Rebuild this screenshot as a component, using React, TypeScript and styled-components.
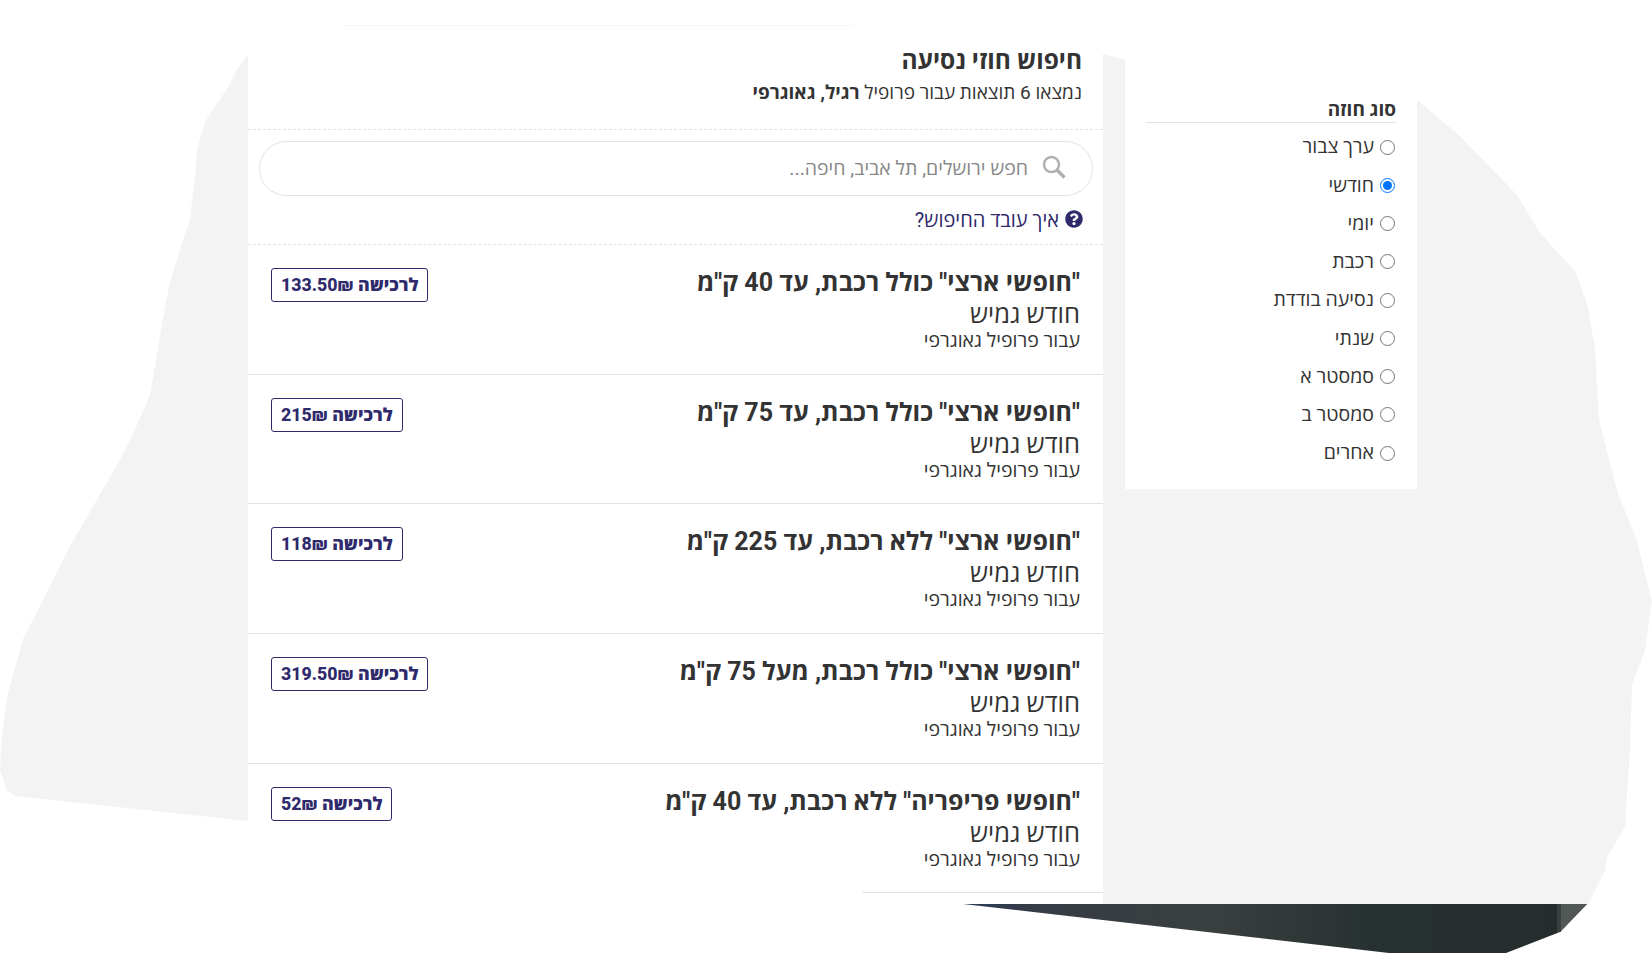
import * as React from 'react'
import styled, { createGlobalStyle } from 'styled-components'
import { FaQuestionCircle } from 'react-icons/fa'

const GlobalStyle = createGlobalStyle`
  html, body {
    margin: 0;
    padding: 0;
    background: white;
  }
  * {
    box-sizing: border-box;
  }
`

const Page = styled.div`
  position: relative;
  height: 953px;
  overflow: hidden;
  font-family: 'Roboto', 'Open Sans', sans-serif;
  color: #333;
`

const Backdrop = styled.svg`
  position: absolute;
  top: 0;
  left: 0;
`

const Layout = styled.div`
  position: relative;
  display: flex;
  align-items: flex-start;
  gap: 22px;
  padding-right: 235px;
`

const Sidebar = styled.aside`
  width: 292px;
  height: 489px;
  padding: 99px 21px 0;
  background-color: white;
`

const FilterTitle = styled.h3`
  margin: 0 0 5px;
  padding-bottom: 2px;
  height: 24px;
  line-height: 21px;
  font-size: 19px;
  font-weight: 700;
  border-bottom: 1px solid #e2e2e2;
`

const FilterOption = styled.label`
  display: flex;
  align-items: center;
  gap: 6px;
  height: 38.25px;
  padding-right: 1px;
  font-size: 19.5px;
  line-height: 1;
`

const Radio = styled.input`
  width: 15px;
  height: 15px;
  margin: 0;
  accent-color: #0075ff;
`

const Main = styled.main`
  position: relative;
  width: 855px;
  height: 904px;
  background-color: white;
`

const FaintLine = styled.div`
  position: absolute;
  top: 25px;
  left: 97px;
  width: 508px;
  height: 1px;
  background-color: #f5f5f5;
`

const Header = styled.header`
  height: 130px;
  padding: 46px 21px 0;
  border-bottom: 1px dashed #e2e2e2;
`

const Title = styled.h1`
  margin: 0 0 5px;
  font-size: 24.5px;
  line-height: 30px;
  font-weight: 700;
`

const Subtitle = styled.p`
  margin: 0;
  font-size: 19px;
  line-height: 24px;
`

const SearchArea = styled.div`
  height: 115px;
  padding: 11px 10px 0 11px;
  border-bottom: 1px dashed #e2e2e2;
`

const SearchBox = styled.div`
  display: flex;
  align-items: center;
  gap: 14px;
  height: 55px;
  padding: 0 26px 3px;
  border: 1px solid #e2e2e2;
  border-radius: 28px;
  font-size: 19.5px;
  color: #888;
`

const HowLink = styled.div`
  display: flex;
  align-items: center;
  gap: 6px;
  height: 46px;
  padding-right: 10px;
  font-size: 20px;
  color: #2e2a6b;
`

const Row = styled.article`
  display: flex;
  justify-content: space-between;
  align-items: flex-start;
  height: 129.7px;
  padding: 23px 23px 0 23px;
  border-bottom: 1px solid #e2e2e2;
  &:last-of-type {
    border-bottom: none;
  }
`

const RowText = styled.div`
  display: flex;
  flex-direction: column;
`

const RowTitle = styled.h2`
  margin: 0;
  font-size: 25px;
  line-height: 30px;
  font-weight: 700;
`

const RowKind = styled.span`
  font-size: 25.5px;
  line-height: 32px;
`

const RowProfile = styled.span`
  font-size: 19.5px;
  line-height: 21px;
`

const BuyButton = styled.a`
  display: block;
  height: 34px;
  padding: 0 9px;
  border: 1px solid #2e2a6b;
  border-radius: 3px;
  font-size: 17.8px;
  font-weight: 800;
  line-height: 32px;
  color: #2e2a6b;
  white-space: nowrap;
`

const ClosingLine = styled.div`
  position: absolute;
  top: 892px;
  right: 0;
  width: 241px;
  height: 1px;
  background-color: #e2e2e2;
`

const contractTypes = ['ערך צבור', 'חודשי', 'יומי', 'רכבת', 'נסיעה בודדת', 'שנתי', 'סמסטר א', 'סמסטר ב', 'אחרים']

const contracts = [
  { title: '"חופשי ארצי" כולל רכבת, עד 40 ק"מ', price: '133.50' },
  { title: '"חופשי ארצי" כולל רכבת, עד 75 ק"מ', price: '215' },
  { title: '"חופשי ארצי" ללא רכבת, עד 225 ק"מ', price: '118' },
  { title: '"חופשי ארצי" כולל רכבת, מעל 75 ק"מ', price: '319.50' },
  { title: '"חופשי פריפריה" ללא רכבת, עד 40 ק"מ', price: '52' },
]

const blob =
  '248,54 238,68 227,89 213,109 205,122 197,150 195,174 190,220 183,240 170,282 163,318 157,354 150,395 130,441 113,472 73,541 43,600 23,639 8,693 2,734 0,770 7,790 15,796 248,821 248,904 1588,904 1605,871 1607,857 1625,827 1630,750 1632,684 1645,651 1652,601 1637,541 1617,491 1599,420 1595,348 1587,304 1575,271 1540,233 1517,195 1458,134 1417,100 1125,60 1103,54'

const SearchIcon = () => (
  <svg width="24" height="24" viewBox="0 0 24 24" fill="none" stroke="#b0b0b0">
    <circle cx="9.5" cy="9.5" r="7.5" strokeWidth="2.4" />
    <path d="M15 15l7.5 7.5" strokeWidth="3.4" />
  </svg>
)

const App = () => (
  <Page dir="rtl">
    <GlobalStyle />
    <Backdrop width="1652" height="953" viewBox="0 0 1652 953">
      <defs>
        <linearGradient id="floor" x1="963" y1="0" x2="1588" y2="0" gradientUnits="userSpaceOnUse">
          <stop offset="0" stopColor="#2a3a58" />
          <stop offset="0.12" stopColor="#363c44" />
          <stop offset="0.4" stopColor="#3a3f3f" />
          <stop offset="0.65" stopColor="#283131" />
          <stop offset="0.95" stopColor="#252d2d" />
        </linearGradient>
      </defs>
      <polygon points={blob} fill="#f3f3f3" />
      <polygon points="963,904 1587,904 1560,932 1506,953 1389,953" fill="url(#floor)" />
      <polygon points="1557,904 1587,904 1561,931 1557,933" fill="#525856" />
      <rect x="1557" y="904" width="4" height="28" fill="#3a3f3f" />
    </Backdrop>
    <Layout>
      <Sidebar>
        <FilterTitle>סוג חוזה</FilterTitle>
        {contractTypes.map(type => (
          <FilterOption key={type}>
            <Radio type="radio" name="contract" defaultChecked={type === 'חודשי'} />
            {type}
          </FilterOption>
        ))}
      </Sidebar>
      <Main>
        <FaintLine />
        <Header>
          <Title>חיפוש חוזי נסיעה</Title>
          <Subtitle>
            נמצאו 6 תוצאות עבור פרופיל <b>רגיל, גאוגרפי</b>
          </Subtitle>
        </Header>
        <SearchArea>
          <SearchBox>
            <SearchIcon />
            חפש ירושלים, תל אביב, חיפה...
          </SearchBox>
          <HowLink>
            <FaQuestionCircle size={18} />
            איך עובד החיפוש?
          </HowLink>
        </SearchArea>
        {contracts.map(contract => (
          <Row key={contract.title}>
            <RowText>
              <RowTitle>{contract.title}</RowTitle>
              <RowKind>חודש גמיש</RowKind>
              <RowProfile>עבור פרופיל גאוגרפי</RowProfile>
            </RowText>
            <BuyButton>לרכישה {contract.price}₪</BuyButton>
          </Row>
        ))}
        <ClosingLine />
      </Main>
    </Layout>
  </Page>
)

export default App
